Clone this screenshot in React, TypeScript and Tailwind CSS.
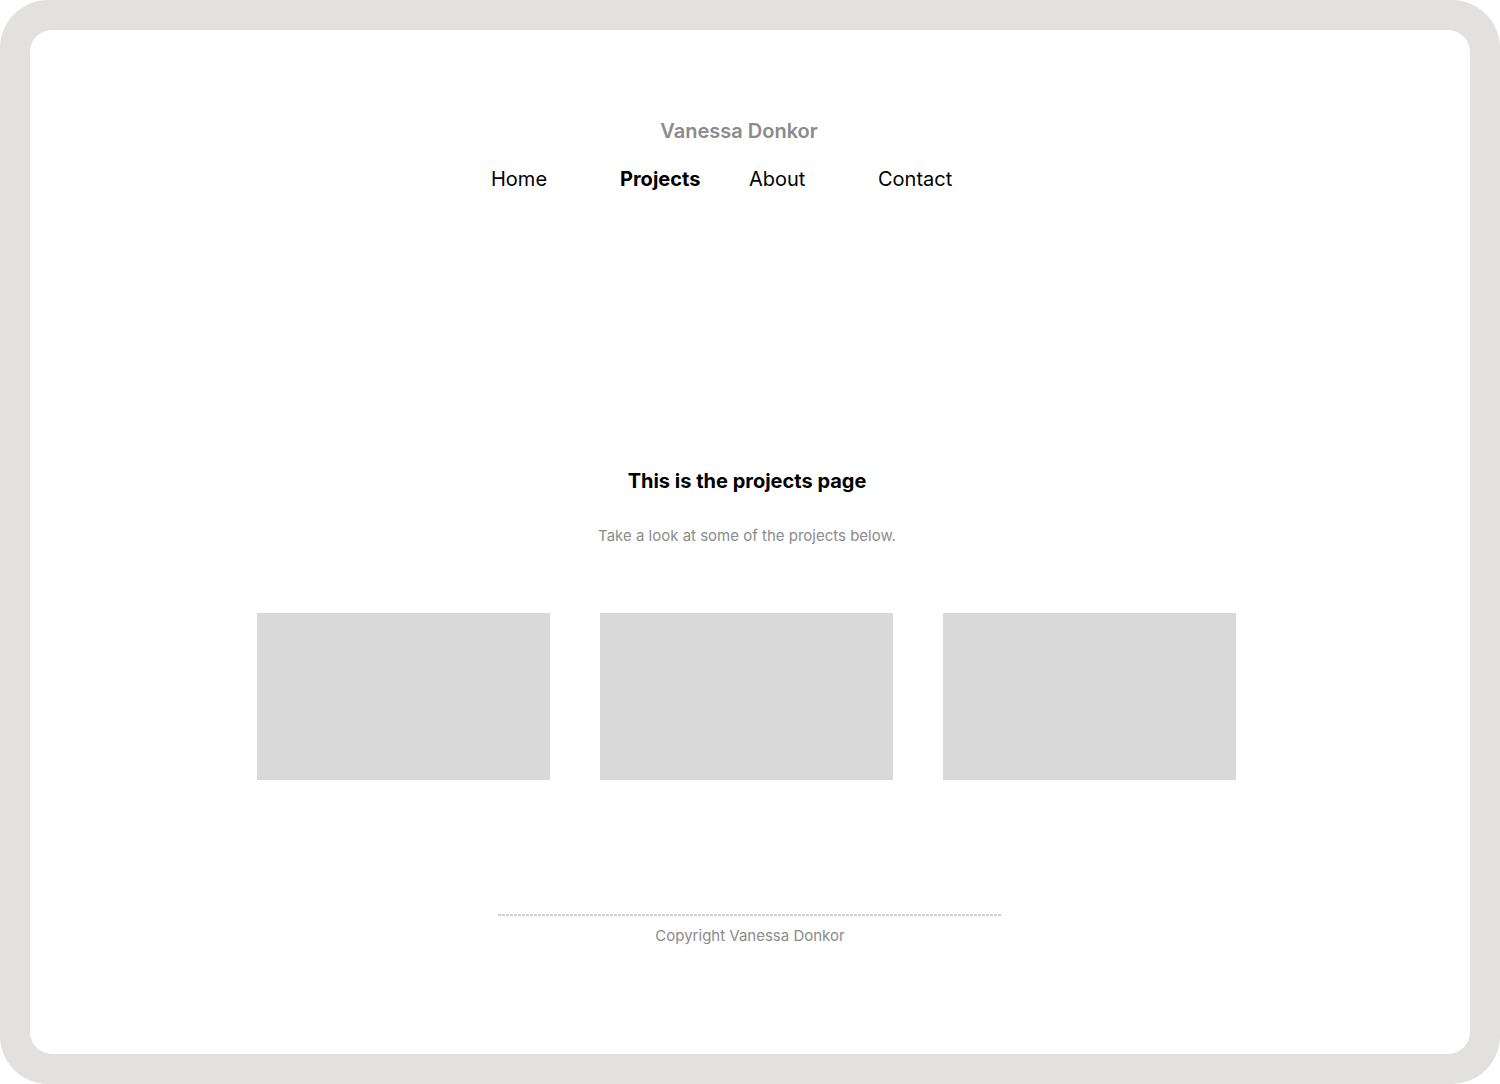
const navItems = [
  { label: "Home", active: false },
  { label: "Projects", active: true },
  { label: "About", active: false },
  { label: "Contact", active: false },
];

export default function App() {
  return (
    <div className="w-[1500px] h-[1084px] bg-white font-['Inter',sans-serif]">
      <div className="w-full h-full bg-[#e2e1df] rounded-[48px] p-[30px]">
        <div className="w-full h-full bg-white rounded-[22px] flex flex-col items-center">
          {/* header */}
          <div className="mt-[89px] pr-[22px] text-[20px] leading-[24px] font-semibold text-[#8b8b8b]">
            Vanessa Donkor
          </div>
          <nav className="mt-[24px] mr-[2px] flex">
            {navItems.map((item) => (
              <span
                key={item.label}
                className={
                  item.active
                    ? "w-[129px] text-[20px] leading-[24px] font-bold text-black"
                    : "w-[129px] text-[20px] leading-[24px] text-black"
                }
              >
                {item.label}
              </span>
            ))}
          </nav>

          {/* main */}
          <h1 className="mt-[278px] pr-[6px] text-[20px] leading-[24px] font-bold text-black">
            This is the projects page
          </h1>
          <p className="mt-[34px] pr-[6px] text-[15px] leading-[18px] text-[#8b8b8b]">
            Take a look at some of the projects below.
          </p>
          <div className="mt-[68px] mr-[7px] flex gap-[50px]">
            <div className="w-[293px] h-[167px] bg-[#d9d9d9]" />
            <div className="w-[293px] h-[167px] bg-[#d9d9d9]" />
            <div className="w-[293px] h-[167px] bg-[#d9d9d9]" />
          </div>

          {/* footer */}
          <div className="mt-[134px] w-[504px] h-[2px] bg-[repeating-linear-gradient(to_right,#cfcfcf_0_3px,transparent_3px_4px)]" />
          <p className="mt-[11px] text-[15px] leading-[18px] text-[#8b8b8b]">
            Copyright Vanessa Donkor
          </p>
        </div>
      </div>
    </div>
  );
}
